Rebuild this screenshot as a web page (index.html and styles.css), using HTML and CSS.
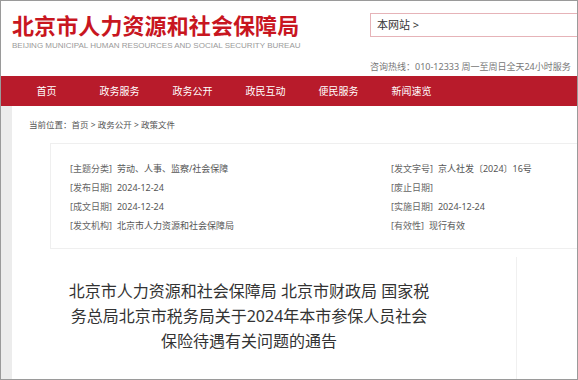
FILE: index.html
```html
<!DOCTYPE html>
<html lang="zh-CN">
<head>
  <meta charset="utf-8" />
  <title>北京市人力资源和社会保障局 - 政策文件</title>
  <meta name="viewport" content="width=device-width, initial-scale=1">
  <link rel="stylesheet" href="styles.css">
</head>
<body>
  <div class="frame">
    <!-- ===== CABECERA ===== -->
    <header class="top">
      <div class="logo">
        <div class="logo-cn">北京市人力资源和社会保障局</div>
        <div class="logo-en">BEIJING MUNICIPAL HUMAN RESOURCES AND SOCIAL SECURITY BUREAU</div>
      </div>
      <div class="top-right">
        <div class="search">本网站 &gt;</div>
        <div class="hotline">咨询热线：010-12333 周一至周日全天24小时服务</div>
      </div>
    </header>

    <!-- ===== MENU ===== -->
    <nav class="menu">
      <a>首页</a>
      <a>政务服务</a>
      <a>政务公开</a>
      <a>政民互动</a>
      <a>便民服务</a>
      <a>新闻速览</a>
    </nav>

    <!-- ===== CONTENIDO ===== -->
    <div class="main">
      <div class="strip"></div>
      <div class="content">
        <div class="crumb">当前位置：首页 &gt; 政务公开 &gt; 政策文件</div>

        <div class="meta">
          <div class="row"><span class="lbl">[主题分类]</span>劳动、人事、监察/社会保障</div>
          <div class="row"><span class="lbl">[发文字号]</span>京人社发〔2024〕16号</div>
          <div class="row"><span class="lbl">[发布日期]</span>2024-12-24</div>
          <div class="row"><span class="lbl">[废止日期]</span></div>
          <div class="row"><span class="lbl">[成文日期]</span>2024-12-24</div>
          <div class="row"><span class="lbl">[实施日期]</span>2024-12-24</div>
          <div class="row"><span class="lbl">[发文机构]</span>北京市人力资源和社会保障局</div>
          <div class="row"><span class="lbl">[有效性]</span>现行有效</div>
        </div>

        <div class="article">
          <h1 class="title">北京市人力资源和社会保障局 北京市财政局 国家税务总局北京市税务局关于2024年本市参保人员社会保险待遇有关问题的通告</h1>
        </div>
      </div>
    </div>
  </div>
</body>
</html>
```

FILE: styles.css
```css
/* ===== RESET & BODY ===== */
* {
  box-sizing: border-box;
  margin: 0;
  padding: 0
}

body {
  font-family: "Noto Sans", "Noto Sans CJK SC", sans-serif;
  background: #fff;
  color: #333
}

.frame {
  width: 578px;
  height: 380px;
  border: 1px solid #9a9a9a;
  overflow: hidden;
  display: flex;
  flex-direction: column
}

/* ===== CABECERA ===== */
.top {
  height: 75px;
  display: flex;
  flex-shrink: 0
}

.logo {
  padding: 10px 0 0 11px
}

.logo-cn {
  font-family: "Noto Sans CJK SC", sans-serif;
  font-size: 22px;
  line-height: 26px;
  font-weight: 700;
  color: #c8161f;
  letter-spacing: 0.1px
}

.logo-en {
  margin-top: 3px;
  font-family: "Liberation Sans", sans-serif;
  font-size: 8px;
  line-height: 12px;
  color: #9a9a9a;
  white-space: nowrap
}

.top-right {
  margin-left: auto;
  width: 207px;
  padding-top: 12px;
  flex-shrink: 0
}

.search {
  width: 215px;
  height: 24px;
  border: 1px solid #e6b3b8;
  padding-left: 6px;
  font-size: 11px;
  line-height: 21px;
  color: #333
}

.hotline {
  margin-top: 24px;
  font-size: 9px;
  line-height: 12px;
  color: #777;
  white-space: nowrap
}

/* ===== MENU ===== */
.menu {
  height: 30px;
  background: #b81b2b;
  display: flex;
  padding-left: 9px;
  flex-shrink: 0
}

.menu a {
  width: 73px;
  text-align: center;
  font-size: 10px;
  line-height: 30px;
  color: #fff
}

/* ===== CONTENIDO ===== */
.main {
  flex: 1;
  display: flex;
  min-height: 0
}

.strip {
  width: 11px;
  flex-shrink: 0;
  background: #ececec
}

.content {
  flex: 1;
  min-width: 0
}

.crumb {
  padding: 9px 0 0 17px;
  font-size: 8.5px;
  line-height: 19px;
  color: #555
}

.meta {
  margin: 9px 0 0 38px;
  width: 560px;
  border: 1px solid #efefef;
  padding: 15px 0 13px 19px;
  display: grid;
  grid-template-columns: 321px auto;
  font-size: 9px;
  line-height: 19px;
  color: #555
}

.lbl {
  color: #666;
  margin-right: 5px
}

.article {
  margin: 8px 0 0 38px;
  width: 467px;
  height: 130px;
  border-right: 1px solid #f0f0f0;
  padding-top: 22px
}

.title {
  width: 366px;
  margin-left: 16px;
  text-align: center;
  font-size: 16px;
  font-weight: 400;
  line-height: 25px;
  color: #333
}
```
